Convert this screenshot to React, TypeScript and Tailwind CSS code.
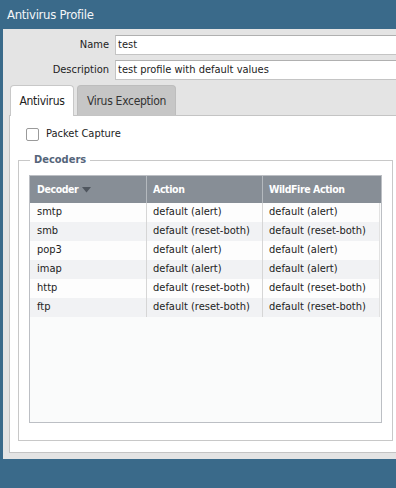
import React from 'react';

const rows = [
  { decoder: 'smtp', action: 'default (alert)', wildfire: 'default (alert)' },
  { decoder: 'smb', action: 'default (reset-both)', wildfire: 'default (reset-both)' },
  { decoder: 'pop3', action: 'default (alert)', wildfire: 'default (alert)' },
  { decoder: 'imap', action: 'default (alert)', wildfire: 'default (alert)' },
  { decoder: 'http', action: 'default (reset-both)', wildfire: 'default (reset-both)' },
  { decoder: 'ftp', action: 'default (reset-both)', wildfire: 'default (reset-both)' },
];

const font = "font-['DejaVu_Sans_Condensed','DejaVu_Sans',sans-serif]";

export default function App() {
  return (
    <div className={`w-[396px] h-[488px] overflow-hidden bg-[#3a6a8a] flex flex-col ${font} text-[11px] text-[#222]`}>
      {/* Title bar */}
      <div className="h-[29px] shrink-0 flex items-center px-[7px] text-[13px] tracking-[-0.3px] text-[#f4f6f8]">
        Antivirus Profile
      </div>

      {/* Dialog body */}
      <div className="ml-[3px] w-[420px] h-[430px] shrink-0 bg-[#e4e4e4] flex flex-col pt-[6px]">
        <div className="flex items-center h-[20px]">
          <label className="w-[106px] text-right">Name</label>
          <div className="ml-[6px] flex-1 h-[20px] bg-white border border-[#c4c4c4] border-t-[#b0b0b0] flex items-center px-[2px]">test</div>
        </div>
        <div className="flex items-center h-[20px] mt-[5px]">
          <label className="w-[106px] text-right">Description</label>
          <div className="ml-[6px] flex-1 h-[20px] bg-white border border-[#c4c4c4] border-t-[#b0b0b0] flex items-center px-[2px]">test profile with default values</div>
        </div>

        {/* Tabs */}
        <div className="flex items-end mt-[5px] ml-[7px] h-[30px] gap-[3px] relative z-10">
          <div className="w-[64px] h-[31px] -mb-px bg-white border border-[#c8c8c8] border-b-0 rounded-t-[4px] flex items-center justify-center text-[12px] tracking-[-0.3px]">
            Antivirus
          </div>
          <div className="w-[99px] h-[30px] bg-[#c6c6c6] border border-[#bdbdbd] border-b-0 rounded-t-[4px] flex items-center justify-center text-[12px] tracking-[-0.3px] text-[#333]">
            Virus Exception
          </div>
        </div>

        {/* Tab content */}
        <div className="ml-[6px] h-[338px] bg-white border border-[#c4c4c4] flex flex-col">
          <div className="flex items-center mt-[11px] ml-[16px] h-[14px]">
            <span className="w-[13px] h-[13px] border border-[#9a9a9a] rounded-[2px] bg-white" />
            <span className="ml-[7px]">Packet Capture</span>
          </div>

          <fieldset className="mt-[11px] ml-[8px] w-[375px] h-[289px] border border-[#c8c8c8] px-[10px]">
            <legend className="ml-[1px] px-[4px] font-bold text-[#55657a] text-[11px] leading-[16px]">Decoders</legend>
            <div className="mt-[7px] w-[353px] h-[248px] border border-[#bcbfc4] bg-[#fafbfb] flex flex-col">
              <div className="flex h-[27px] bg-[#878e96] text-white font-bold text-[10.5px] tracking-[-0.4px] shrink-0">
                <div className="w-[117px] border-r border-[#b4b9be] flex items-center pl-[7px] gap-[4px]">
                  Decoder
                  <svg width="9" height="6" viewBox="0 0 9 6"><path d="M0 0 L9 0 L4.5 5.5 Z" fill="#4f565e" /></svg>
                </div>
                <div className="w-[116px] border-r border-[#b4b9be] flex items-center pl-[6px]">Action</div>
                <div className="w-[116px] flex items-center pl-[6px]">WildFire Action</div>
              </div>
              {rows.map((r, i) => (
                <div key={r.decoder} className={`flex h-[19px] w-[350px] ${i % 2 === 0 ? 'bg-[#fdfdfd]' : 'bg-[#f1f2f4]'}`}>
                  <div className="w-[117px] border-r border-[#d6d6d6] flex items-center pl-[7px]">{r.decoder}</div>
                  <div className="w-[116px] border-r border-[#d6d6d6] flex items-center pl-[6px]">{r.action}</div>
                  <div className="w-[117px] border-r border-[#e2e2e2] flex items-center pl-[6px]">{r.wildfire}</div>
                </div>
              ))}
            </div>
          </fieldset>
        </div>
      </div>
    </div>
  );
}
